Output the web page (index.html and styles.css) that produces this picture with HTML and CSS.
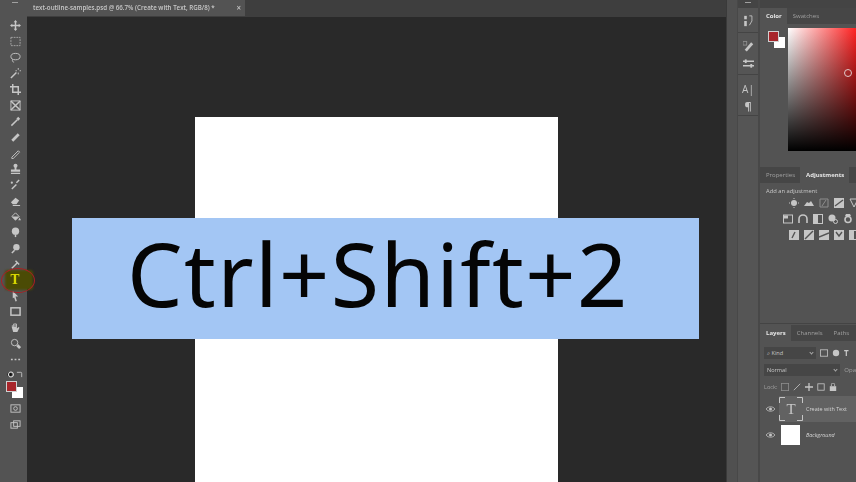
FILE: index.html
```html
<!DOCTYPE html>
<html lang="en">
<head>
    <meta charset="UTF-8">
    <title>text-outline-samples.psd</title>
    <link rel="stylesheet" href="styles.css">
</head>
<body>
    <div class="app">
        <!-- Left tools -->
        <div class="toolbar">
            <div class="grip-row"><i class="grip"></i></div>
            <div class="tool"><svg viewBox="0 0 12 12"><path class="fill" d="M6 0l2 2.500H6.800v2.700h2.700V4L12 6 9.500 8V6.800H6.800v2.700H8L6 12 4 9.500h1.200V6.800H2.500V8L0 6l2.500-2v1.200h2.700V2.500H4z"/></svg></div>
            <div class="tool"><svg viewBox="0 0 12 12"><rect class="dash" x="1" y="1.500" width="10" height="9"/></svg></div>
            <div class="tool"><svg viewBox="0 0 12 12"><ellipse class="line" cx="6" cy="5" rx="5" ry="3.500"/><path class="line" d="M3 8c-1 2 0 3 1.500 3"/></svg></div>
            <div class="tool"><svg viewBox="0 0 12 12"><path class="thick" d="M1 11l6-6"/><path class="line" d="M9 0v2M9 5v2M6 3h1.500M10.500 3H12"/></svg></div>
            <div class="tool"><svg viewBox="0 0 12 12"><path class="thick" d="M3 0v9h9M0 3h9v9"/></svg></div>
            <div class="tool"><svg viewBox="0 0 12 12"><rect class="line" x="1" y="1" width="10" height="10"/><path class="thick" d="M1 1l10 10M11 1L1 11"/></svg></div>
            <div class="tool"><svg viewBox="0 0 12 12"><path class="thick" d="M1.500 10.500L8 4"/><path class="heavy" d="M8 4l2-2"/></svg></div>
            <div class="tool"><svg viewBox="0 0 12 12"><path class="heavy" d="M2.500 9.500l7-7"/></svg></div>
            <div class="tool"><svg viewBox="0 0 12 12"><path class="line" d="M2 10l7-7 1.500 1.500-7 7H2z"/></svg></div>
            <div class="tool"><svg viewBox="0 0 12 12"><circle class="fill" cx="6" cy="3" r="2.200"/><path class="fill" d="M5 4h2v3h4v2.500H1V7h4zM1 10.500h10V12H1z"/></svg></div>
            <div class="tool"><svg viewBox="0 0 12 12"><path class="thick" d="M2 11l5-5M7 4l3-3"/><circle class="fill" cx="2" cy="4" r="1.200"/></svg></div>
            <div class="tool"><svg viewBox="0 0 12 12"><path class="fill" d="M1 8l5-5 4 3-3 4H3zM3 11h8v1H3z"/></svg></div>
            <div class="tool"><svg viewBox="0 0 12 12"><path class="line" d="M2 6l4-4 4 4-4 4z"/><path class="fill" d="M2 6h8l-4 4zM10.500 7l1.500 3h-3z"/></svg></div>
            <div class="tool"><svg viewBox="0 0 12 12"><circle class="fill" cx="6" cy="4.500" r="4"/><path class="thick" d="M6 8v3"/></svg></div>
            <div class="tool"><svg viewBox="0 0 12 12"><circle class="fill" cx="7" cy="4.500" r="3.500"/><path class="thick" d="M5 8l-3 3"/></svg></div>
            <div class="tool"><svg viewBox="0 0 12 12"><path class="thick" d="M2 10l6-6M6 2l4 4"/></svg></div>
            <div class="tool tool-text"><span>T</span></div>
            <div class="tool"><svg viewBox="0 0 12 12"><path class="fill" d="M3 0l6 6H6l1.500 5-1.500.500L4.500 7 3 8z"/></svg></div>
            <div class="tool"><svg viewBox="0 0 12 12"><rect class="thick" x="1" y="2" width="10" height="8"/></svg></div>
            <div class="tool"><svg viewBox="0 0 12 12"><path class="fill" d="M2 6V3.500h1V5.500h.500V2h1v3.500H5V1h1v4.500h.500V2h1v5l2-1.500.8.800L8 11H3.500z"/></svg></div>
            <div class="tool"><svg viewBox="0 0 12 12"><circle class="line" cx="5" cy="5" r="3.500"/><path class="heavy" d="M8 8l3 3"/></svg></div>
            <div class="tool"><svg viewBox="0 0 12 12"><path class="thick" d="M1 6h2M5 6h2M9 6h2"/></svg></div>
            <div class="swap-row">
                <svg viewBox="0 0 8 8"><circle class="black" cx="3" cy="4" r="2.500"/><circle class="ring" cx="4.500" cy="4" r="2.800"/></svg>
                <svg viewBox="0 0 8 8"><path class="line" d="M1 1.500h4.500a1 1 0 0 1 1 1V7"/></svg>
            </div>
            <div class="swatches tool-swatches"><i class="fg"></i><i class="bg"></i></div>
            <div class="tool"><svg viewBox="0 0 12 12"><rect class="line" x="1" y="2" width="10" height="8"/><circle class="line" cx="6" cy="6" r="2"/></svg></div>
            <div class="tool"><svg viewBox="0 0 12 12"><rect class="line" x="1" y="4" width="7" height="6"/><rect class="line" x="4" y="2" width="7" height="6"/></svg></div>
        </div>

        <!-- Document -->
        <div class="workspace">
            <div class="tabbar">
                <div class="doc-tab"><span>text-outline-samples.psd @ 66.7% (Create with Text, RGB/8) *</span><span class="close">×</span></div>
            </div>
            <div class="canvas">
                <div class="page"></div>
                <div class="banner">Ctrl+Shift+2</div>
            </div>
        </div>

        <div class="gutter"></div>

        <!-- Collapsed dock -->
        <div class="dock">
            <div class="dock-head"><i class="grip"></i></div>
            <div class="dock-group dock-one"><svg viewBox="0 0 12 14"><rect class="fill" x="1" y="1" width="3" height="4"/><rect class="fill" x="1" y="7" width="3" height="6"/><path class="line" d="M7 1h3v6l-3 5"/></svg></div>
            <div class="dock-group dock-two">
                <svg viewBox="0 0 12 12"><path class="heavy" d="M3 11l7-8"/><rect class="ghost" x="0" y="1" width="4" height="4"/></svg>
                <svg viewBox="0 0 12 12"><path class="thick" d="M0 3h12M0 8h12"/><rect class="fill" x="2" y="1" width="2" height="4"/><rect class="fill" x="8" y="6" width="2" height="4"/></svg>
            </div>
            <div class="dock-group dock-three">
                <span class="dock-a">A|</span>
                <span class="dock-p">¶</span>
            </div>
        </div>

        <!-- Panels -->
        <div class="panels">
            <section class="panel panel-color">
                <div class="tabs"><span class="tab active">Color</span><span class="tab">Swatches</span></div>
                <div class="color-body">
                    <div class="swatches"><i class="fg"></i><i class="bg"></i></div>
                    <div class="picker"><i class="marker"></i></div>
                </div>
            </section>
            <section class="panel panel-adjust">
                <div class="tabs"><span class="tab">Properties</span><span class="tab active">Adjustments</span></div>
                <div class="adjust-title">Add an adjustment</div>
                <div class="adjust-row row-one">
                    <svg viewBox="0 0 10 10"><circle class="fill" cx="5" cy="5" r="3"/><path class="line" d="M5 0v1M5 9v1M0 5h1M9 5h1"/></svg>
                    <svg viewBox="0 0 10 10"><path class="fill" d="M0 8l3-4 2 1 2-2 3 5z"/></svg>
                    <svg viewBox="0 0 10 10"><path class="ghost" d="M1 9V1h8v8zM3 8l4-6"/></svg>
                    <svg viewBox="0 0 10 10"><rect class="fill" width="10" height="10"/><path class="cut" d="M1 8l8-6"/></svg>
                    <svg viewBox="0 0 10 10"><path class="line" d="M1 1h8L5 9z"/></svg>
                </div>
                <div class="adjust-row row-two">
                    <svg viewBox="0 0 10 10"><rect class="line" x=".5" y="1" width="9" height="8"/><rect class="fill" x="1" y="1.500" width="4" height="3"/></svg>
                    <svg viewBox="0 0 10 10"><path class="thick" d="M1 9V5a4 4 0 0 1 8 0v4"/></svg>
                    <svg viewBox="0 0 10 10"><rect class="line" x=".5" y=".5" width="9" height="9"/><rect class="fill" x="1" y="1" width="4" height="8"/></svg>
                    <svg viewBox="0 0 10 10"><circle class="fill" cx="4" cy="4" r="3.500"/><circle class="line" cx="7.500" cy="7.500" r="2"/></svg>
                    <svg viewBox="0 0 10 10"><circle class="thick" cx="5" cy="5.500" r="3"/><path class="fill" d="M3 0h4l1 2H2z"/></svg>
                    <svg viewBox="0 0 10 10"><rect class="fill" width="10" height="10"/></svg>
                </div>
                <div class="adjust-row row-three">
                    <svg viewBox="0 0 10 10"><rect class="fill" width="10" height="10"/><path class="cut" d="M3 8l3-6"/></svg>
                    <svg viewBox="0 0 10 10"><rect class="fill" width="10" height="10"/><path class="cut" d="M1 9l8-8"/></svg>
                    <svg viewBox="0 0 10 10"><rect class="fill" width="10" height="10"/><path class="cut" d="M0 7l10-4"/></svg>
                    <svg viewBox="0 0 10 10"><rect class="fill" width="10" height="10"/><path class="cut" d="M2 2l3 4 3-4"/></svg>
                    <svg viewBox="0 0 10 10"><rect class="line" x=".5" y=".5" width="9" height="9"/><rect class="fill" x="1" y="1" width="4" height="8"/></svg>
                </div>
            </section>
            <section class="panel panel-layers">
                <div class="tabs"><span class="tab active">Layers</span><span class="tab">Channels</span><span class="tab">Paths</span></div>
                <div class="layer-controls kind-row">
                    <div class="select select-kind"><span>⌕ Kind</span><b></b></div>
                    <svg viewBox="0 0 10 10"><rect class="line" x=".5" y="1" width="9" height="8"/></svg>
                    <svg viewBox="0 0 10 10"><circle class="fill" cx="5" cy="5" r="4"/></svg>
                    <span class="kind-t">T</span>
                </div>
                <div class="layer-controls blend-row">
                    <div class="select select-blend"><span>Normal</span><b></b></div>
                    <span class="opacity">Opa</span>
                </div>
                <div class="layer-controls lock-row">
                    <span>Lock:</span>
                    <svg viewBox="0 0 10 10"><rect class="ghost" x=".5" y=".5" width="9" height="9"/></svg>
                    <svg viewBox="0 0 10 10"><path class="line" d="M1 9l8-8"/></svg>
                    <svg viewBox="0 0 10 10"><path class="thick" d="M5 0v10M0 5h10"/></svg>
                    <svg viewBox="0 0 10 10"><rect class="line" x="1" y="1" width="8" height="8"/></svg>
                    <svg viewBox="0 0 10 10"><rect class="fill" x="1" y="4" width="8" height="6"/><path class="line" d="M3 4V2a2 2 0 0 1 4 0v2"/></svg>
                </div>
                <div class="layer layer-top">
                    <svg class="eye" viewBox="0 0 12 8"><path class="line" d="M0 4c3-4 9-4 12 0-3 4-9 4-12 0z"/><circle class="fill" cx="6" cy="4" r="2"/></svg>
                    <div class="layer-main selected">
                        <div class="thumb thumb-text">
                            <svg viewBox="0 0 24 24"><path class="line" d="M.5 6V.5H6M18 .5h5.500V6M23.500 18v5.500H18M6 23.500H.5V18"/></svg>
                            <span>T</span>
                        </div>
                        <span class="layer-name">Create with Text</span>
                    </div>
                </div>
                <div class="layer">
                    <svg class="eye" viewBox="0 0 12 8"><path class="line" d="M0 4c3-4 9-4 12 0-3 4-9 4-12 0z"/><circle class="fill" cx="6" cy="4" r="2"/></svg>
                    <div class="layer-main">
                        <div class="thumb thumb-white"></div>
                        <span class="layer-name background">Background</span>
                    </div>
                </div>
            </section>
        </div>

        <!-- Highlight over the type tool -->
        <div class="tool-glow"></div>
        <div class="tool-circle"></div>
    </div>
</body>
</html>
```

FILE: styles.css
```css
* {
    box-sizing: border-box;
}
html, body {
    margin: 0;
    height: 100%;
    overflow: hidden;
    background: #535353;
}
body {
    font-family: 'Open Sans', 'Liberation Sans', sans-serif;
    font-size: 6px;
    color: #c8c8c8;
}
svg .fill {
    fill: #c6c6c6;
}
svg .line {
    fill: none;
    stroke: #c6c6c6;
    stroke-width: 1;
}
svg .thick {
    fill: none;
    stroke: #c6c6c6;
    stroke-width: 1.6;
}
svg .heavy {
    fill: none;
    stroke: #c6c6c6;
    stroke-width: 3;
}
svg .dash {
    fill: none;
    stroke: #a8a8a8;
    stroke-width: 1;
    stroke-dasharray: 2 1;
}
svg .ghost {
    fill: none;
    stroke: #8e8e8e;
    stroke-width: 1;
}
svg .cut {
    fill: none;
    stroke: #535353;
    stroke-width: 1.4;
}
svg .black {
    fill: #111;
}
svg .ring {
    fill: none;
    stroke: #e0e0e0;
    stroke-width: 1.2;
}
.app {
    position: relative;
    display: flex;
    width: 856px;
    height: 482px;
    overflow: hidden;
    background: linear-gradient(to right, #535353 27px, transparent 27px);
}
.grip {
    display: block;
    width: 6px;
    height: 1px;
    background: #a0a0a0;
}

/* left tools */
.toolbar {
    position: relative;
    z-index: 2;
    width: 27px;
    flex: none;
    display: flex;
    flex-direction: column;
    align-items: center;
    padding-left: 3px;
    filter: blur(0.6px);
}
.grip-row {
    flex: none;
    height: 18px;
    padding-top: 2px;
}
.tool {
    height: 15.9px;
    flex: none;
    display: flex;
    align-items: center;
    justify-content: center;
}
.tool svg {
    width: 11px;
    height: 11px;
}
.tool-text span {
    font-family: 'DejaVu Serif', serif;
    font-size: 12px;
    font-weight: bold;
    color: #d6d600;
}
.swap-row {
    display: flex;
    justify-content: space-between;
    width: 16px;
    height: 8px;
    margin-top: 3px;
}
.swap-row svg {
    width: 7px;
    height: 7px;
}
.swatches {
    position: relative;
    flex: none;
    width: 18px;
    height: 18px;
}
.swatches i {
    position: absolute;
    display: block;
    width: 11px;
    height: 11px;
}
.swatches .fg {
    left: 0;
    top: 0;
    z-index: 1;
    background: #a8262b;
    border: 1px solid #d0d0d0;
}
.swatches .bg {
    left: 6px;
    top: 6px;
    background: #fff;
}
.tool-swatches {
    margin: 2px 0 2px;
}

/* document */
.workspace {
    width: 699px;
    flex: none;
    display: flex;
    flex-direction: column;
}
.tabbar {
    height: 17px;
    flex: none;
    background: #3e3e3e;
}
.doc-tab {
    display: flex;
    align-items: center;
    justify-content: space-between;
    width: 218px;
    height: 16px;
    padding: 0 4px 2px 6px;
    background: #535353;
    font-size: 6.2px;
    font-weight: 600;
    white-space: nowrap;
    filter: blur(0.3px);
}
.close {
    font-size: 8px;
}
.canvas {
    position: relative;
    flex: 1;
    display: flex;
    justify-content: center;
    padding-top: 100px;
    background: #292929;
}
.page {
    width: 363px;
    height: 100%;
    background: #fff;
}
.banner {
    position: absolute;
    left: 45px;
    top: 201px;
    display: flex;
    align-items: center;
    width: 627px;
    height: 121px;
    padding: 0 0 12px 55px;
    background: #a3c6f4;
    color: #050505;
    font-family: 'Noto Sans', sans-serif;
    font-size: 88px;
    letter-spacing: 1.4px;
    white-space: nowrap;
}
.gutter {
    width: 11px;
    flex: none;
    background: #505050;
    border-left: 1px solid #3a3a3a;
}

/* collapsed dock */
.dock {
    width: 23px;
    flex: none;
    display: flex;
    flex-direction: column;
    background: #555;
    border-left: 1px solid #484848;
    border-right: 2px solid #484848;
    filter: blur(0.5px);
}
.dock-head {
    height: 8px;
    flex: none;
    display: flex;
    justify-content: center;
    padding-top: 2px;
    background: #444;
}
.dock-group {
    display: flex;
    flex-direction: column;
    align-items: center;
    border-bottom: 1px solid #444;
}
.dock-group svg {
    width: 11px;
    height: 12px;
}
.dock-one {
    height: 25px;
    padding-top: 7px;
}
.dock-two {
    height: 42px;
    padding-top: 7px;
    gap: 6px;
}
.dock-three {
    height: 41px;
    padding-top: 7px;
    color: #c6c6c6;
}
.dock-a {
    font-size: 10px;
    line-height: 15px;
}
.dock-p {
    font-size: 11px;
    font-weight: bold;
    line-height: 17px;
}

/* panels */
.panels {
    width: 96px;
    flex: none;
    display: flex;
    flex-direction: column;
    background: #535353;
}
.panel {
    display: flex;
    flex-direction: column;
    overflow: hidden;
}
.panel-color {
    height: 165px;
    padding-top: 8px;
    background: linear-gradient(#444 8px, transparent 8px);
}
.panel-adjust {
    height: 158px;
}
.panel-layers {
    flex: 1;
    padding-top: 1px;
    border-top: 1px solid #444;
}
.tabs {
    flex: none;
    display: flex;
    height: 16px;
    background: #464646;
    filter: blur(0.35px);
}
.tab {
    padding: 0 5px 0 6px;
    line-height: 16px;
    font-size: 6px;
    color: #a0a0a0;
    white-space: nowrap;
}
.tab.active {
    background: #535353;
    color: #e6e6e6;
    font-weight: 700;
}
.color-body {
    display: flex;
    padding: 7px 0 0 8px;
}
.color-body .swatches {
    width: 20px;
}
.picker {
    position: relative;
    width: 68px;
    height: 123px;
    margin-top: -3px;
    background: linear-gradient(to bottom, transparent, #000), linear-gradient(to right, #fff, #f22);
}
.marker {
    position: absolute;
    left: 56px;
    top: 41px;
    width: 8px;
    height: 8px;
    border: 1.5px solid #e0c8c8;
    border-radius: 50%;
}
.panel-adjust .tabs {
    margin-top: 2px;
}
.adjust-title {
    padding: 4px 0 0 6px;
    height: 12px;
    line-height: 9px;
    font-size: 5.8px;
    filter: blur(0.3px);
}
.adjust-row {
    display: flex;
    gap: 5px;
    height: 16px;
    align-items: center;
    white-space: nowrap;
    filter: blur(0.5px);
}
.adjust-row svg {
    flex: none;
    width: 10px;
    height: 10px;
}
.row-one {
    padding-left: 29px;
}
.row-two {
    padding-left: 23px;
}
.row-three {
    padding-left: 29px;
}
.layer-controls {
    display: flex;
    align-items: center;
    gap: 4px;
    height: 17px;
    padding-left: 4px;
    white-space: nowrap;
    filter: blur(0.4px);
}
.layer-controls svg {
    flex: none;
    width: 8px;
    height: 8px;
}
.kind-row {
    margin-top: 3px;
}
.select {
    display: flex;
    align-items: center;
    justify-content: space-between;
    height: 12px;
    padding: 0 3px;
    background: #464646;
    font-size: 5.6px;
    color: #c8c8c8;
}
.select b {
    width: 3px;
    height: 3px;
    border-right: 1px solid #aaa;
    border-bottom: 1px solid #aaa;
    transform: rotate(45deg);
}
.select-kind {
    width: 52px;
}
.select-blend {
    width: 78px;
}
.kind-t {
    font-weight: bold;
    font-size: 8px;
}
.opacity {
    color: #a0a0a0;
}
.lock-row {
    font-size: 5.6px;
    color: #a0a0a0;
}
.layer {
    display: flex;
    align-items: center;
    gap: 4px;
    height: 26px;
    padding-left: 6px;
    filter: blur(0.35px);
}
.layer-top {
    margin-top: 1px;
}
.layer-main {
    flex: 1;
    height: 100%;
    display: flex;
    align-items: center;
    gap: 3px;
}
.selected {
    background: #626262;
}
.eye {
    flex: none;
    width: 9px;
    height: 6px;
}
.thumb {
    flex: none;
}
.thumb-text {
    position: relative;
    display: flex;
    align-items: center;
    justify-content: center;
    width: 24px;
    height: 24px;
    font-family: 'Liberation Serif', serif;
    font-size: 15px;
}
.thumb-text svg {
    position: absolute;
    inset: 0;
}
.thumb-white {
    width: 19px;
    height: 20px;
    margin: 0 3px 0 2px;
    background: #fff;
}
.layer-name {
    font-size: 5.4px;
    white-space: nowrap;
    color: #d4d4d4;
}
.background {
    font-style: italic;
}

/* type tool highlight */
.tool-glow {
    position: absolute;
    left: 5px;
    top: 270px;
    width: 28px;
    height: 20px;
    z-index: 1;
    background: #4b4b05;
    border-radius: 3px;
    filter: blur(0.8px);
}
.tool-circle {
    position: absolute;
    left: 1px;
    top: 268px;
    width: 34px;
    height: 25px;
    z-index: 4;
    border: 1.5px solid #ab1f24;
    border-radius: 50%;
    filter: blur(0.4px);
}
```
